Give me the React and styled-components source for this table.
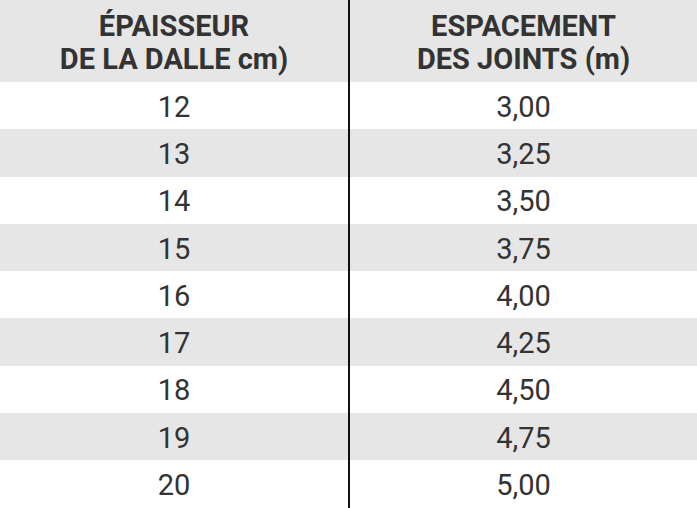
import React from 'react';
import styled, { createGlobalStyle } from 'styled-components';

const GlobalStyle = createGlobalStyle`
  html, body { margin: 0; padding: 0; background: #fff; }
  body { font-family: Roboto, "Liberation Sans", sans-serif; }
`;

const rows = [
  ['12', '3,00'],
  ['13', '3,25'],
  ['14', '3,50'],
  ['15', '3,75'],
  ['16', '4,00'],
  ['17', '4,25'],
  ['18', '4,50'],
  ['19', '4,75'],
  ['20', '5,00'],
];

export default function App() {
  return (
    <>
      <GlobalStyle />
      <Table>
        <HeadCell>ÉPAISSEUR<br />DE LA DALLE cm)</HeadCell>
        <HeadCell right>ESPACEMENT<br />DES JOINTS (m)</HeadCell>
        {rows.map(([a, b], i) => (
          <React.Fragment key={a}>
            <Cell striped={i % 2 === 1}>{a}</Cell>
            <Cell striped={i % 2 === 1} right>{b}</Cell>
          </React.Fragment>
        ))}
      </Table>
    </>
  );
}

const Table = styled.div`
  display: grid;
  grid-template-columns: 348px 1fr;
  grid-template-rows: 82px repeat(9, 47.3px);
  width: 697px;
  color: #333;
`;

const HeadCell = styled.div`
  display: flex;
  align-items: center;
  justify-content: center;
  padding-top: 3px;
  box-sizing: border-box;
  text-align: center;
  background: #e6e6e6;
  font-weight: 700;
  font-size: 29px;
  line-height: 33px;
  border-left: ${(p) => (p.right ? '2px solid #111' : 'none')};
`;

const Cell = styled.div`
  display: flex;
  align-items: center;
  justify-content: center;
  padding-top: 2px;
  box-sizing: border-box;
  background: ${(p) => (p.striped ? '#e6e6e6' : '#fff')};
  font-size: 29px;
  border-left: ${(p) => (p.right ? '2px solid #111' : 'none')};
`;
